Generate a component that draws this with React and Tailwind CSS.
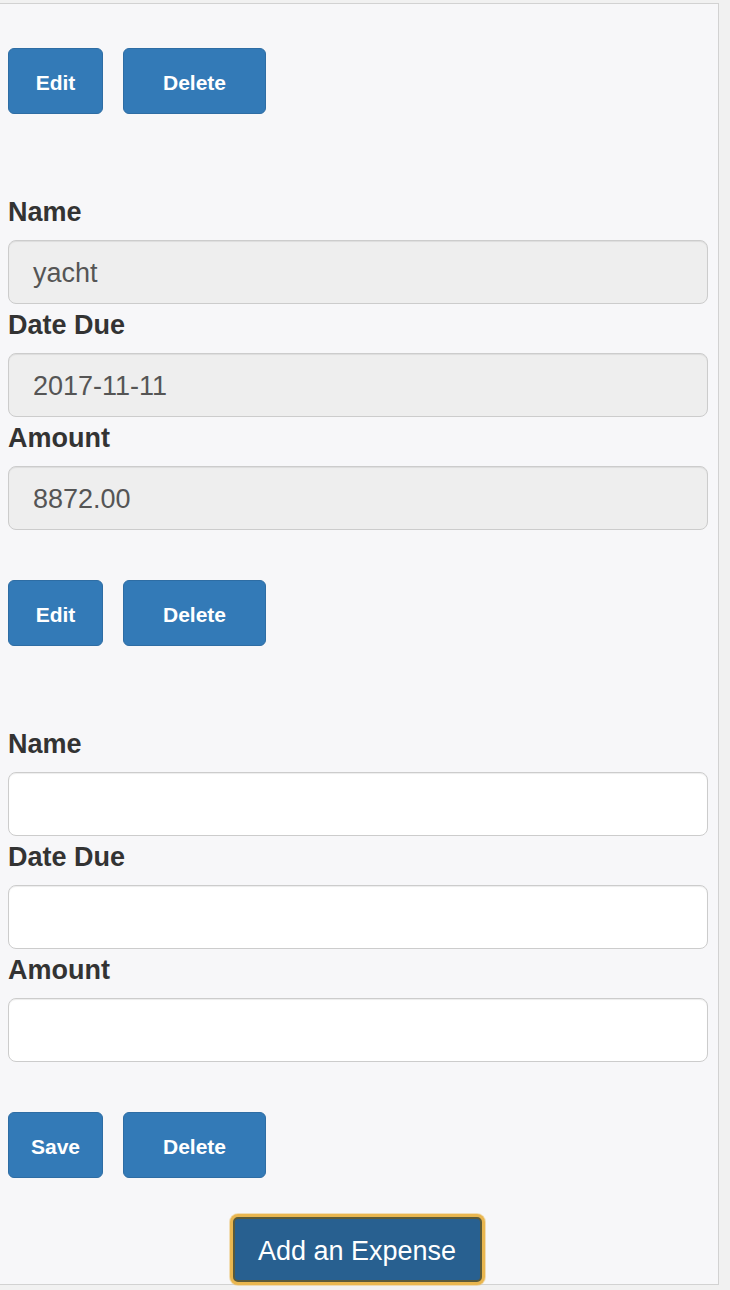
import React from "react";

const font = { fontFamily: '"Liberation Sans", Arial, sans-serif' };

function Btn({ children, w }) {
  return (
    <button
      className={`${w} h-[66px] rounded-[6px] border border-[#2e6da4] bg-[#337ab7] pt-[4px] text-[21px] font-bold text-white`}
      style={font}
    >
      {children}
    </button>
  );
}

function Buttons({ first }) {
  return (
    <div className="flex gap-[20px]">
      <Btn w="w-[95px]">{first}</Btn>
      <Btn w="w-[143px]">Delete</Btn>
    </div>
  );
}

function Field({ label, value, disabled }) {
  return (
    <div>
      <div className="h-[39px] mb-[10px] pt-[3px] text-[27px] font-bold leading-[36px] text-[#333]">
        {label}
      </div>
      <div
        className={`flex h-[64px] items-center rounded-[8px] border border-[#ccc] pl-[24px] pt-[3px] text-[27px] text-[#555] shadow-[inset_0_1px_1px_rgba(0,0,0,0.075)] ${
          disabled ? "bg-[#eeeeee]" : "bg-white"
        }`}
      >
        {value}
      </div>
    </div>
  );
}

export default function App() {
  return (
    <div className="w-[730px] h-[1290px] bg-[#f1f1f1] pt-[3px]" style={font}>
      <div className="w-[719px] border-t border-r border-b border-[#d2d2d2] bg-[#f7f7f9] pl-[8px] pr-[10px] pt-[44px] pb-[2px]">
        <Buttons first="Edit" />
        <div className="mt-[77px]">
          <Field label="Name" value="yacht" disabled />
          <Field label="Date Due" value="2017-11-11" disabled />
          <Field label="Amount" value="8872.00" disabled />
        </div>
        <div className="mt-[50px]">
          <Buttons first="Edit" />
        </div>
        <div className="mt-[77px]">
          <Field label="Name" value="" />
          <Field label="Date Due" value="" />
          <Field label="Amount" value="" />
        </div>
        <div className="mt-[50px]">
          <Buttons first="Save" />
        </div>
        <div className="mt-[39px] flex justify-center pr-[2px]">
          <button className="h-[65px] w-[249px] rounded-[5px] border-2 border-[#5a5a3a] bg-[#286090] pt-[3px] text-[27px] text-white shadow-[0_0_0_3px_#e9b64f,0_0_0_4px_rgba(233,182,79,0.4)]">
            Add an Expense
          </button>
        </div>
      </div>
    </div>
  );
}
